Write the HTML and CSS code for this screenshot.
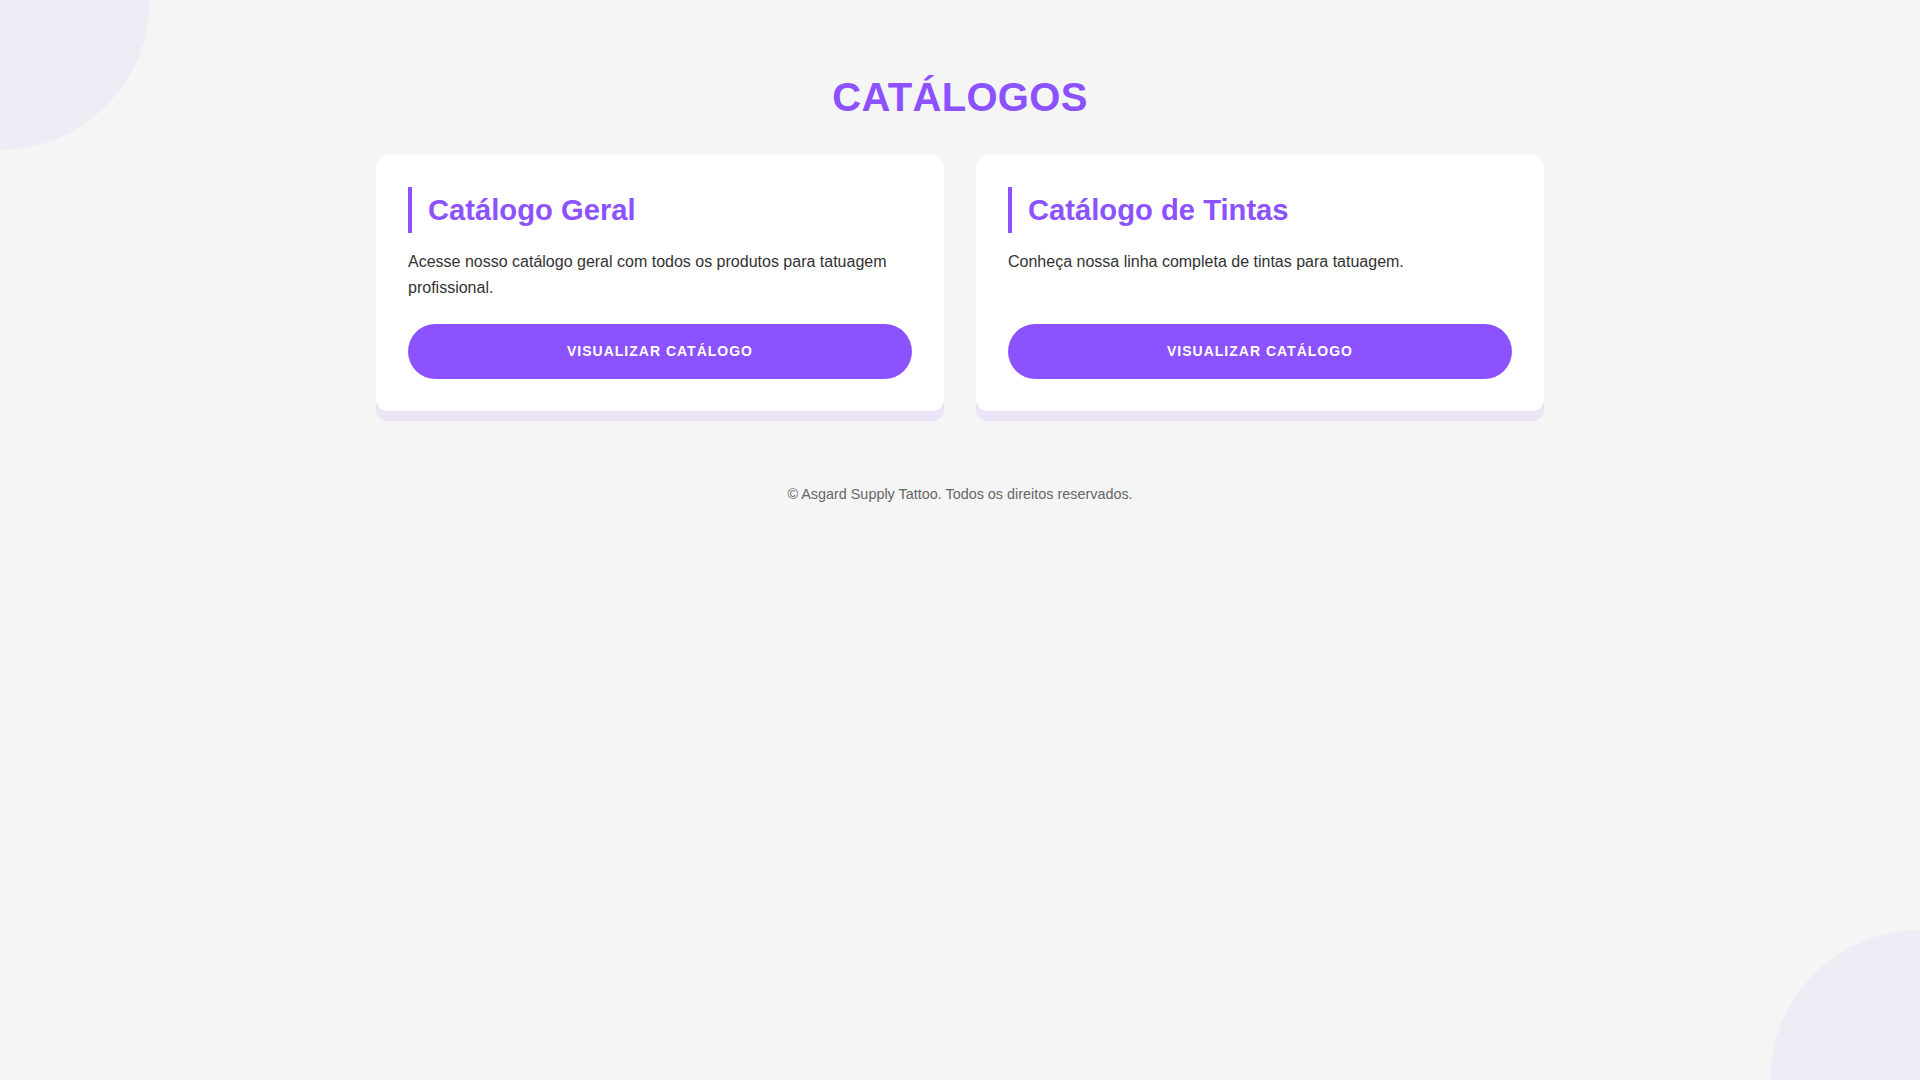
FILE: index.html
```html
<!DOCTYPE html>
<html lang="pt-BR">
<head>
    <meta charset="UTF-8">
    <meta name="viewport" content="width=device-width, initial-scale=1.0">
    <title>Catálogos - Asgard Supply Tattoo</title>
    <link rel="stylesheet" href="styles.css">
</head>
<body>
<div class="bg-circle top-left"></div>
<div class="bg-circle bottom-right"></div>

<div class="container">
    <h1>Catálogos</h1>

    <div class="catalog-grid">
        <div class="card">
            <h2>Catálogo Geral</h2>
            <p>Acesse nosso catálogo geral com todos os produtos para tatuagem profissional.</p>
            <a href="#" class="btn">Visualizar Catálogo</a>
        </div>
        <div class="card">
            <h2>Catálogo de Tintas</h2>
            <p>Conheça nossa linha completa de tintas para tatuagem.</p>
            <a href="#" class="btn">Visualizar Catálogo</a>
        </div>
    </div>

    <footer>&copy; Asgard Supply Tattoo. Todos os direitos reservados.</footer>
</div>
</body>
</html>
```

FILE: styles.css
```css
body {
    font-family: "Liberation Sans", Arial, sans-serif;
    margin: 0;
    background: #f5f5f5;
    color: #333;
    min-height: 100vh;
    overflow: hidden;
}
.bg-circle {
    position: fixed;
    width: 300px;
    height: 300px;
    border-radius: 50%;
    background: rgba(140, 82, 255, 0.05);
    z-index: 0;
}
.bg-circle.top-left {
    top: -150px;
    left: -150px;
}
.bg-circle.bottom-right {
    bottom: -150px;
    right: -150px;
}
.container {
    position: relative;
    z-index: 1;
    box-sizing: border-box;
    max-width: 1200px;
    margin: 0 auto;
    padding: 74px 16px 0;
}
h1 {
    text-align: center;
    text-transform: uppercase;
    font-size: 40px;
    line-height: 46px;
    letter-spacing: 0.3px;
    margin: 0 0 35px;
    color: #8c52ff;
}
.catalog-grid {
    display: grid;
    grid-template-columns: 1fr 1fr;
    gap: 32px;
}
.card {
    display: flex;
    flex-direction: column;
    background: #fff;
    border-radius: 12px;
    padding: 32px;
    box-shadow: 0 10px 0 rgba(140, 82, 255, 0.1);
}
.card h2 {
    margin: 0 0 16px;
    padding-left: 16px;
    border-left: 4px solid #8c52ff;
    font-size: 29.2px;
    line-height: 46px;
    color: #8c52ff;
}
.card p {
    margin: 0 0 24px;
    font-size: 16px;
    line-height: 1.6;
    color: #333;
}
.btn {
    display: block;
    margin-top: auto;
    padding: 19px;
    border-radius: 50px;
    background: #8c52ff;
    color: #fff;
    text-align: center;
    text-decoration: none;
    text-transform: uppercase;
    font-weight: bold;
    font-size: 14px;
    line-height: 17px;
    letter-spacing: 1px;
}
.btn:hover {
    background: #7a3ff0;
}
footer {
    margin-top: 48px;
    padding: 25px 0;
    text-align: center;
    font-size: 14.4px;
    line-height: 20px;
    color: #666;
}
```
